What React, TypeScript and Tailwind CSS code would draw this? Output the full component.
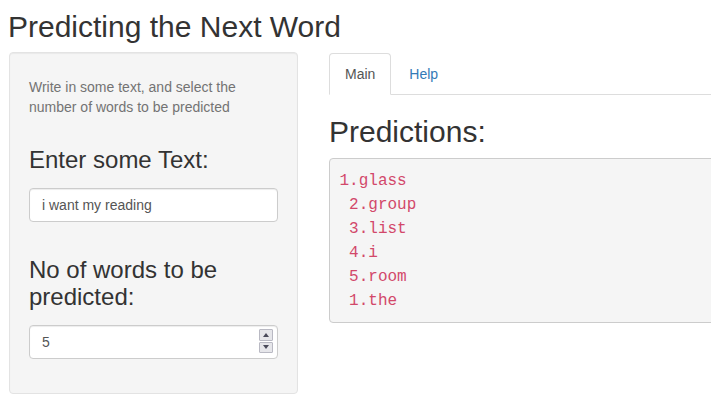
import React from "react";

export default function App() {
  const preds = ["1.glass", " 2.group", " 3.list", " 4.i", " 5.room", " 1.the"];
  return (
    <div
      className="w-[711px] h-[415px] overflow-hidden bg-white text-[#333] text-[14px] leading-[20px]"
      style={{ fontFamily: '"Liberation Sans", Arial, sans-serif' }}
    >
      <div className="pl-[9px]">
        <h2 className="mt-[10px] mb-[9px] ml-[-1px] text-[30px] leading-[33px] font-normal text-[#333] whitespace-nowrap">
          Predicting the Next Word
        </h2>
        <div className="flex gap-[31px] items-start">
          {/* Sidebar */}
          <div className="w-[289px] shrink-0 bg-[#f5f5f5] border border-[#e3e3e3] rounded-[4px] p-[19px] shadow-[inset_0_1px_1px_rgba(0,0,0,0.05)]">
            <span className="block mt-[5px] mb-[10px] text-[#737373] text-[14px] leading-[20px]">
              Write in some text, and select the number of words to be predicted
            </span>
            <div className="mb-[15px]">
              <label className="inline-block max-w-full mb-[5px]">
                <h3 className="mt-[20px] mb-[10px] text-[24px] leading-[26.4px] font-normal text-[#333]">
                  Enter some Text:
                </h3>
              </label>
              <div className="h-[34px] w-full bg-white border border-[#ccc] rounded-[4px] px-[12px] py-[6px] text-[14px] leading-[20px] text-[#555] shadow-[inset_0_1px_1px_rgba(0,0,0,0.075)]">
                i want my reading
              </div>
            </div>
            <div className="mb-[15px]">
              <label className="inline-block max-w-full mb-[5px]">
                <h3 className="mt-[20px] mb-[10px] text-[24px] leading-[26.4px] font-normal text-[#333]">
                  No of words to be predicted:
                </h3>
              </label>
              <div className="relative h-[34px] w-full bg-white border border-[#ccc] rounded-[4px] px-[12px] py-[6px] text-[14px] leading-[20px] text-[#555] shadow-[inset_0_1px_1px_rgba(0,0,0,0.075)]">
                5
                <div className="absolute right-[4px] top-[3px] w-[14px] h-[24px] flex flex-col gap-[1px]">
                  <div className="flex-1 flex items-center justify-center bg-[#e6e6ea] border border-[#b9b9c3] rounded-[1px]">
                    <svg width="6" height="4" viewBox="0 0 6 4">
                      <path d="M0 4 L3 0 L6 4 Z" fill="#4a4a5a" />
                    </svg>
                  </div>
                  <div className="flex-1 flex items-center justify-center bg-[#e6e6ea] border border-[#b9b9c3] rounded-[1px]">
                    <svg width="6" height="4" viewBox="0 0 6 4">
                      <path d="M0 0 L3 4 L6 0 Z" fill="#4a4a5a" />
                    </svg>
                  </div>
                </div>
              </div>
            </div>
          </div>

          {/* Main */}
          <div className="w-[420px] shrink-0 mt-[1px]">
            <ul className="flex border-b border-[#ddd] h-[42px]">
              <li className="-mb-[1px]">
                <div className="px-[15px] py-[10px] leading-[20px] border border-[#ddd] border-b-transparent rounded-t-[4px] bg-white text-[#555] mr-[2px]">
                  Main
                </div>
              </li>
              <li className="-mb-[1px]">
                <div className="px-[15px] py-[10px] leading-[20px] border border-transparent rounded-t-[4px] text-[#337ab7] mr-[2px]">
                  Help
                </div>
              </li>
            </ul>
            <h2 className="mt-[20px] mb-[10px] text-[30px] leading-[33px] font-normal text-[#333]">
              Predictions:
            </h2>
            <pre
              className="bg-[#f5f5f5] border border-[#ccc] rounded-[4px] p-[9.5px] text-[16px] leading-[24px] text-[#d2486a] whitespace-pre"
              style={{ fontFamily: '"Liberation Mono", "Courier New", monospace' }}
            >
              {preds.join("\n")}
            </pre>
          </div>
        </div>
      </div>
    </div>
  );
}
